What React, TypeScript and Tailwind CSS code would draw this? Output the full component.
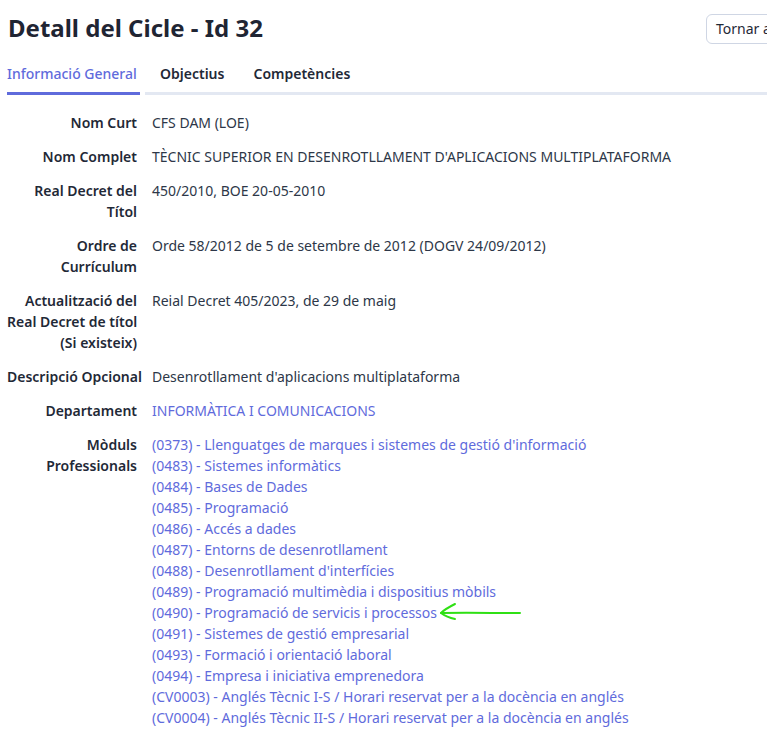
import React from "react";

const LINK = "text-[#5f6bdc]";

const moduls = [
  "(0373) - Llenguatges de marques i sistemes de gestió d'informació",
  "(0483) - Sistemes informàtics",
  "(0484) - Bases de Dades",
  "(0485) - Programació",
  "(0486) - Accés a dades",
  "(0487) - Entorns de desenrotllament",
  "(0488) - Desenrotllament d'interfícies",
  "(0489) - Programació multimèdia i dispositius mòbils",
  "(0490) - Programació de servicis i processos",
  "(0491) - Sistemes de gestió empresarial",
  "(0493) - Formació i orientació laboral",
  "(0494) - Empresa i iniciativa emprenedora",
  "(CV0003) - Anglés Tècnic I-S / Horari reservat per a la docència en anglés",
  "(CV0004) - Anglés Tècnic II-S / Horari reservat per a la docència en anglés",
];

function Row({ label, children }: { label: React.ReactNode; children: React.ReactNode }) {
  return (
    <div className="flex py-[6.5px]">
      <div className="w-[130px] shrink-0 text-right font-semibold text-[#1f2937] whitespace-nowrap">{label}</div>
      <div className="ml-[15px] text-[#2d3748]">{children}</div>
    </div>
  );
}

// the hand-drawn green arrow pointing at (0490)
function Arrow() {
  return (
    <svg className="absolute left-[281px] top-[0px]" width="92" height="22" viewBox="0 0 92 22" fill="none">
      <path d="M8 11 C30 10.5, 60 11, 87 11" stroke="#2fe014" strokeWidth="2" strokeLinecap="round" />
      <path d="M22 2 C16 5, 11 8, 8 11 C12 14, 17 16, 22 17" stroke="#2fe014" strokeWidth="2" strokeLinecap="round" strokeLinejoin="round" />
    </svg>
  );
}

export default function App() {
  return (
    <div
      className="w-[767px] h-[734px] overflow-hidden bg-white text-[14px] leading-[21px]"
      style={{ fontFamily: '"Noto Sans", sans-serif' }}
    >
      <div className="w-[860px] pl-[7px]">
        {/* header */}
        <div className="flex items-start pt-[14px]">
          <h1 className="w-[699px] shrink-0 pl-[1px] text-[24px] leading-[28px] font-bold text-[#1f2533]">
            Detall del Cicle - Id 32
          </h1>
          <button className="h-[30px] px-[9px] rounded-[6px] border border-[#cfd6e4] text-[#1f2937] text-[14px] leading-[20px] whitespace-nowrap">
            Tornar a la llista
          </button>
        </div>

        {/* tabs */}
        <div className="flex mt-[19px] w-[760px]">
          <div className="w-[133px] pb-[8px] border-b-[3px] border-[#5f6bdc] text-[#5f6bdc] font-medium">
            Informació General
          </div>
          <div className="flex-1 ml-[5px] flex gap-[29px] pl-[15px] border-b-[3px] border-[#e3e8f2] font-semibold text-[#1f2937]">
            <span>Objectius</span>
            <span>Competències</span>
          </div>
        </div>

        {/* details */}
        <div className="mt-[10.5px]">
          <Row label="Nom Curt">CFS DAM (LOE)</Row>
          <Row label="Nom Complet">TÈCNIC SUPERIOR EN DESENROTLLAMENT D'APLICACIONS MULTIPLATAFORMA</Row>
          <Row label={<>Real Decret del<br />Títol</>}>450/2010, BOE 20-05-2010</Row>
          <Row label={<>Ordre de<br />Currículum</>}>Orde 58/2012 de 5 de setembre de 2012 (DOGV 24/09/2012)</Row>
          <Row label={<>Actualització del<br />Real Decret de títol<br />(Si existeix)</>}>Reial Decret 405/2023, de 29 de maig</Row>
          <Row label="Descripció Opcional">Desenrotllament d'aplicacions multiplataforma</Row>
          <Row label="Departament">
            <span className={LINK}>INFORMÀTICA I COMUNICACIONS</span>
          </Row>
          <Row label={<>Mòduls<br />Professionals</>}>
            <ul>
              {moduls.map((m) => (
                <li key={m} className={`${LINK} whitespace-nowrap relative`}>
                  {m}
                  {m.startsWith("(0490)") && <Arrow />}
                </li>
              ))}
            </ul>
          </Row>
        </div>
      </div>
    </div>
  );
}
